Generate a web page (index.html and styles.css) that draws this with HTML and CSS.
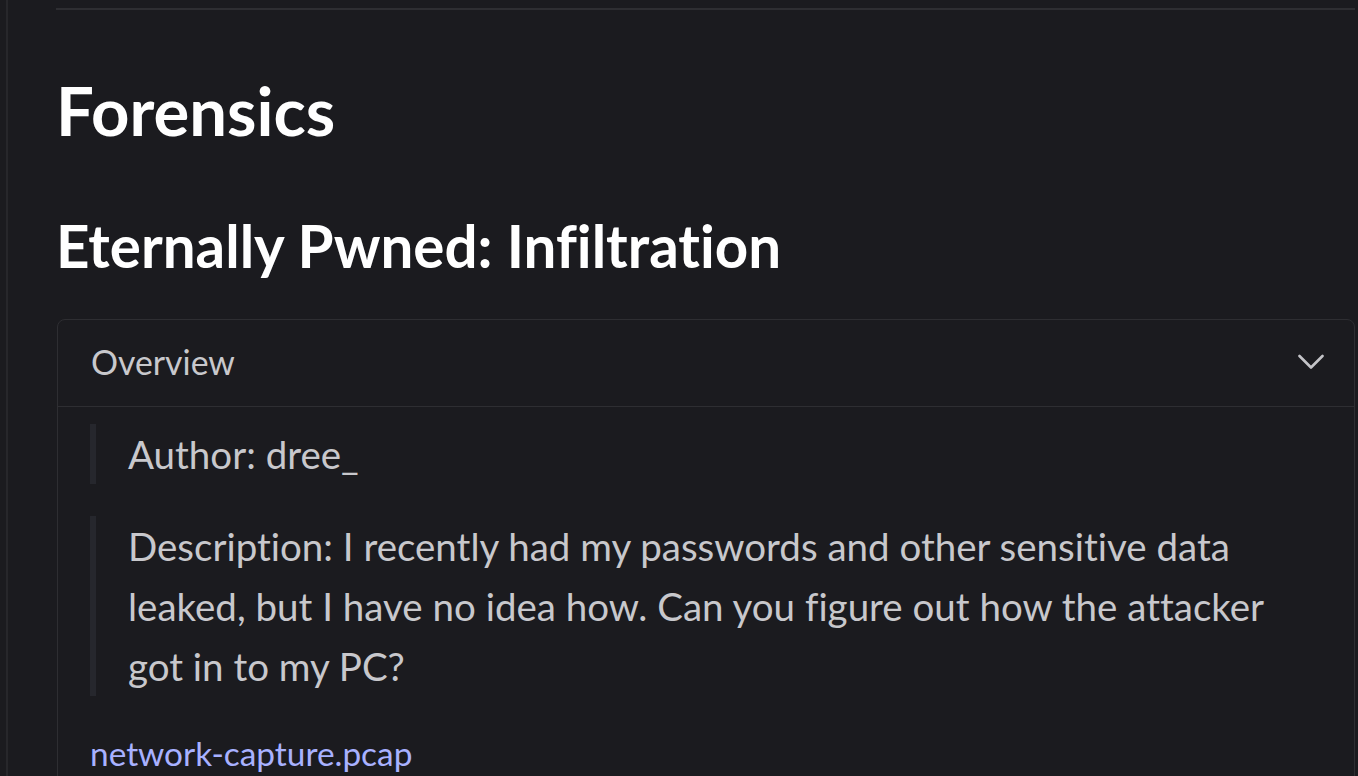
FILE: index.html
```html
<!DOCTYPE html>
<html lang="en">
<head>
<meta charset="utf-8">
<title>Forensics</title>
<link rel="stylesheet" href="styles.css">
</head>
<body>
<div class="frame">
  <main class="content">
    <hr class="divider">
    <h1 class="title">Forensics</h1>
    <h2 class="subtitle">Eternally Pwned: Infiltration</h2>
    <details class="panel" open>
      <summary class="panel-head">
        <span class="panel-label">Overview</span>
        <svg class="chevron" width="26" height="16" viewBox="0 0 26 16" aria-hidden="true"><path d="M1.5 2 L13 13.5 L24.5 2" fill="none" stroke="#c4c4c8" stroke-width="2.6" stroke-linecap="round" stroke-linejoin="round"/></svg>
      </summary>
      <div class="panel-body">
        <blockquote class="quote"><p>Author: dree_</p></blockquote>
        <blockquote class="quote"><p>Description: I recently had my passwords and other sensitive data leaked, but I have no idea how. Can you figure out how the attacker got in to my PC?</p></blockquote>
        <p class="file"><a href="#" class="file-link">network-capture.pcap</a></p>
      </div>
    </details>
  </main>
</div>
</body>
</html>
```
FILE: styles.css
```css
html, body {
  margin: 0;
  padding: 0;
  background: #1b1b1f;
  overflow: hidden;
}
body {
  font-family: "Lato", "Noto Sans", sans-serif;
  font-variant-ligatures: none;
  color: #c8c8cc;
  height: 776px;
}
.frame {
  margin-left: 6px;
  border-left: 2px solid #27272b;
  height: 776px;
  padding-left: 48px;
  padding-right: 3px;
}
.content {
  display: flex;
  flex-direction: column;
}
.divider {
  margin: 8px 0 0 0;
  border: 0;
  height: 2px;
  background: #2e2e32;
}
.title {
  margin: 60px 0 0 0;
  font-size: 67px;
  line-height: 80px;
  font-weight: 700;
  color: #ffffff;
}
.subtitle {
  margin: 59px 0 0 0;
  font-size: 58.3px;
  line-height: 72px;
  font-weight: 700;
  color: #ffffff;
}
.panel {
  margin: 38px 0 0 1px;
  border: 1px solid #2e2e32;
  border-radius: 8px;
}
.panel-head {
  list-style: none;
  display: flex;
  align-items: center;
  justify-content: space-between;
  padding: 21px 30px 23px 33px;
  border-bottom: 1px solid #2e2e32;
  cursor: pointer;
}
.panel-head::-webkit-details-marker { display: none; }
.panel-label {
  font-size: 33.8px;
  line-height: 42px;
  color: #c8c8cc;
}
.chevron { display: block; }
.panel-body {
  padding: 17px 32px 40px 32px;
}
.quote {
  margin: 0 0 32px 0;
  border-left: 6px solid #26272d;
  padding-left: 32px;
}
.quote p {
  margin: 0;
  font-size: 38.5px;
  line-height: 60px;
  color: #c8c8cc;
}
.file {
  margin: 36px 0 0 0;
  font-size: 33.4px;
  line-height: 42px;
}
.file-link {
  color: #a8b1ff;
  text-decoration: none;
}
```
